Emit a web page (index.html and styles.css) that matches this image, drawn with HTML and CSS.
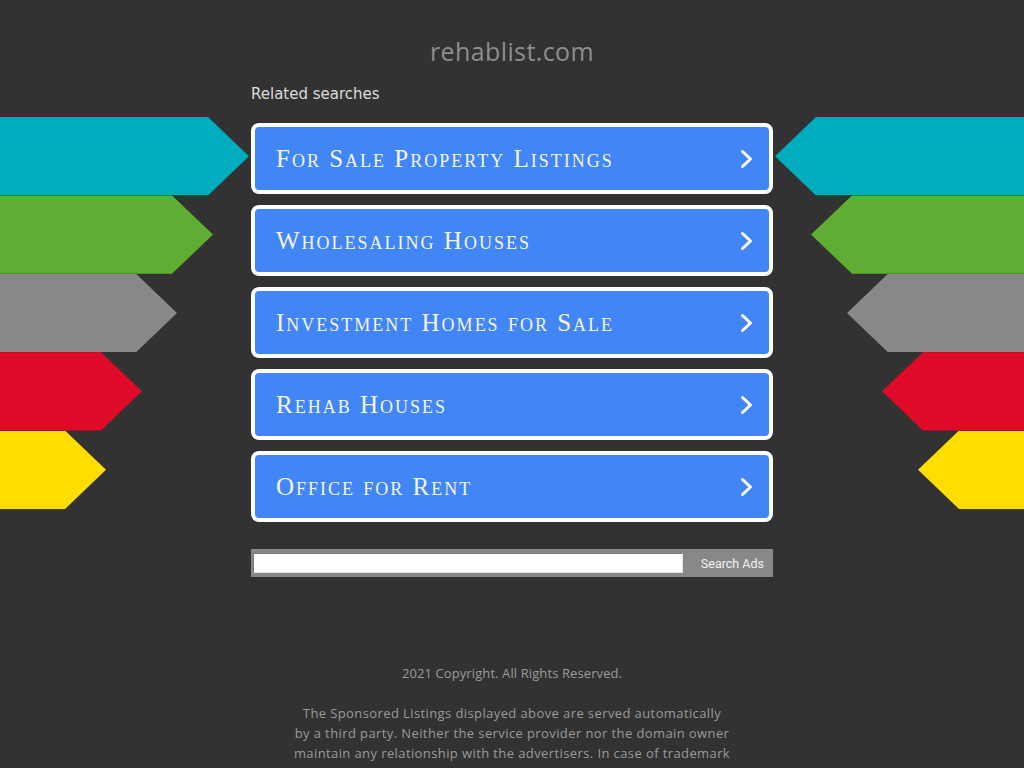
FILE: index.html
```html
<!DOCTYPE html>
<html lang="en">
<head>
<meta charset="utf-8">
<title>rehablist.com</title>
<link rel="stylesheet" href="styles.css">
</head>
<body>
<div class="page">
  <div class="side side-left">
    <div class="arrow a1 cyan"></div>
    <div class="arrow a2 green"></div>
    <div class="arrow a3 gray"></div>
    <div class="arrow a4 red"></div>
    <div class="arrow a5 yellow"></div>
  </div>
  <main class="main">
    <h1 class="title">rehablist.com</h1>
    <div class="related">Related searches</div>
    <ul class="links">
      <li><a class="link" href="#"><span class="label">For Sale Property Listings</span><svg class="chev" width="14" height="20" viewBox="0 0 14 20"><polyline points="2.5,2.5 10.5,10 2.5,17.5" fill="none" stroke="#fff" stroke-width="3" stroke-linecap="round" stroke-linejoin="round"/></svg></a></li>
      <li><a class="link" href="#"><span class="label">Wholesaling Houses</span><svg class="chev" width="14" height="20" viewBox="0 0 14 20"><polyline points="2.5,2.5 10.5,10 2.5,17.5" fill="none" stroke="#fff" stroke-width="3" stroke-linecap="round" stroke-linejoin="round"/></svg></a></li>
      <li><a class="link" href="#"><span class="label">Investment Homes for Sale</span><svg class="chev" width="14" height="20" viewBox="0 0 14 20"><polyline points="2.5,2.5 10.5,10 2.5,17.5" fill="none" stroke="#fff" stroke-width="3" stroke-linecap="round" stroke-linejoin="round"/></svg></a></li>
      <li><a class="link" href="#"><span class="label">Rehab Houses</span><svg class="chev" width="14" height="20" viewBox="0 0 14 20"><polyline points="2.5,2.5 10.5,10 2.5,17.5" fill="none" stroke="#fff" stroke-width="3" stroke-linecap="round" stroke-linejoin="round"/></svg></a></li>
      <li><a class="link" href="#"><span class="label">Office for Rent</span><svg class="chev" width="14" height="20" viewBox="0 0 14 20"><polyline points="2.5,2.5 10.5,10 2.5,17.5" fill="none" stroke="#fff" stroke-width="3" stroke-linecap="round" stroke-linejoin="round"/></svg></a></li>
    </ul>
    <form class="search" onsubmit="return false;">
      <input class="search-input" type="text" aria-label="Search">
      <button class="search-btn" type="submit">Search Ads</button>
    </form>
  </main>
  <div class="side side-right">
    <div class="arrow a1 cyan"></div>
    <div class="arrow a2 green"></div>
    <div class="arrow a3 gray"></div>
    <div class="arrow a4 red"></div>
    <div class="arrow a5 yellow"></div>
  </div>
</div>
<footer class="footer">
  <div class="copyright">2021 Copyright. All Rights Reserved.</div>
  <p class="disclaimer">The Sponsored Listings displayed above are served automatically<br>by a third party. Neither the service provider nor the domain owner<br>maintain any relationship with the advertisers. In case of trademark<br>issues please contact the domain owner directly.</p>
</footer>
</body>
</html>
```

FILE: styles.css
```css
html, body {
  margin: 0;
  padding: 0;
}
body {
  background: #323232;
  font-family: "DejaVu Sans", sans-serif;
  overflow: hidden;
}
.page {
  display: flex;
  justify-content: center;
}
.side {
  flex: 1;
  display: flex;
  flex-direction: column;
  padding-top: 117px;
}
.side-left { align-items: flex-start; }
.side-right { align-items: flex-end; }
.arrow {
  height: 78.4px;
}
.a1 { width: 249px; }
.a2 { width: 213px; }
.a3 { width: 177px; }
.a4 { width: 142px; }
.a5 { width: 106px; }
.side-left .arrow {
  clip-path: polygon(0 0, calc(100% - 41px) 0, 100% 50%, calc(100% - 41px) 100%, 0 100%);
}
.side-right .arrow {
  clip-path: polygon(41px 0, 100% 0, 100% 100%, 41px 100%, 0 50%);
}
.cyan { background: #02acbf; }
.green { background: #5fad32; }
.gray { background: #888888; }
.red { background: #df0b29; }
.yellow { background: #ffdd00; }

.main {
  width: 522px;
  flex: none;
}
.title {
  margin: 36px 0 0;
  font-family: "Open Sans", sans-serif;
  font-weight: 400;
  font-size: 25px;
  letter-spacing: 0.4px;
  line-height: 30px;
  color: #8e8e8e;
  text-align: center;
}
.related {
  margin-top: 18px;
  font-size: 15px;
  line-height: 20px;
  color: #dcdcdc;
}
.links {
  list-style: none;
  margin: 19px 0 0;
  padding: 0;
  display: flex;
  flex-direction: column;
  gap: 11px;
}
.link {
  display: flex;
  align-items: center;
  justify-content: space-between;
  box-sizing: border-box;
  height: 71px;
  padding: 0 15px 0 21px;
  background: #4285f4;
  border: 4px solid #ffffff;
  border-radius: 8px;
  text-decoration: none;
  color: #f4f6fb;
}
.label {
  font-family: "Liberation Serif", serif;
  font-variant: small-caps;
  font-size: 25px;
  letter-spacing: 2px;
}
.chev {
  display: block;
}
.search {
  margin-top: 27px;
  display: flex;
  align-items: center;
  height: 28px;
  background: #888888;
  padding: 0 0 0 2px;
}
.search-input {
  width: 430px;
  height: 20px;
  box-sizing: border-box;
  margin: 0;
  border: 1px solid #e6e6e6;
  border-top-color: #777;
  border-left-color: #777;
  background: #fff;
}
.search-btn {
  flex: 1;
  background: none;
  border: 0;
  padding: 0 9px 0 0;
  text-align: right;
  font-family: Roboto, sans-serif;
  font-size: 12.5px;
  color: #f2f2f2;
}
.footer {
  margin-top: 86px;
  text-align: center;
  font-family: "Open Sans", sans-serif;
  font-size: 13px;
  line-height: 20px;
  color: #9a9a9a;
}
.copyright {
  margin: 0;
  letter-spacing: 0.1px;
}
.disclaimer {
  margin: 20px auto 0;
  width: 460px;
  letter-spacing: 0.4px;
}
```
